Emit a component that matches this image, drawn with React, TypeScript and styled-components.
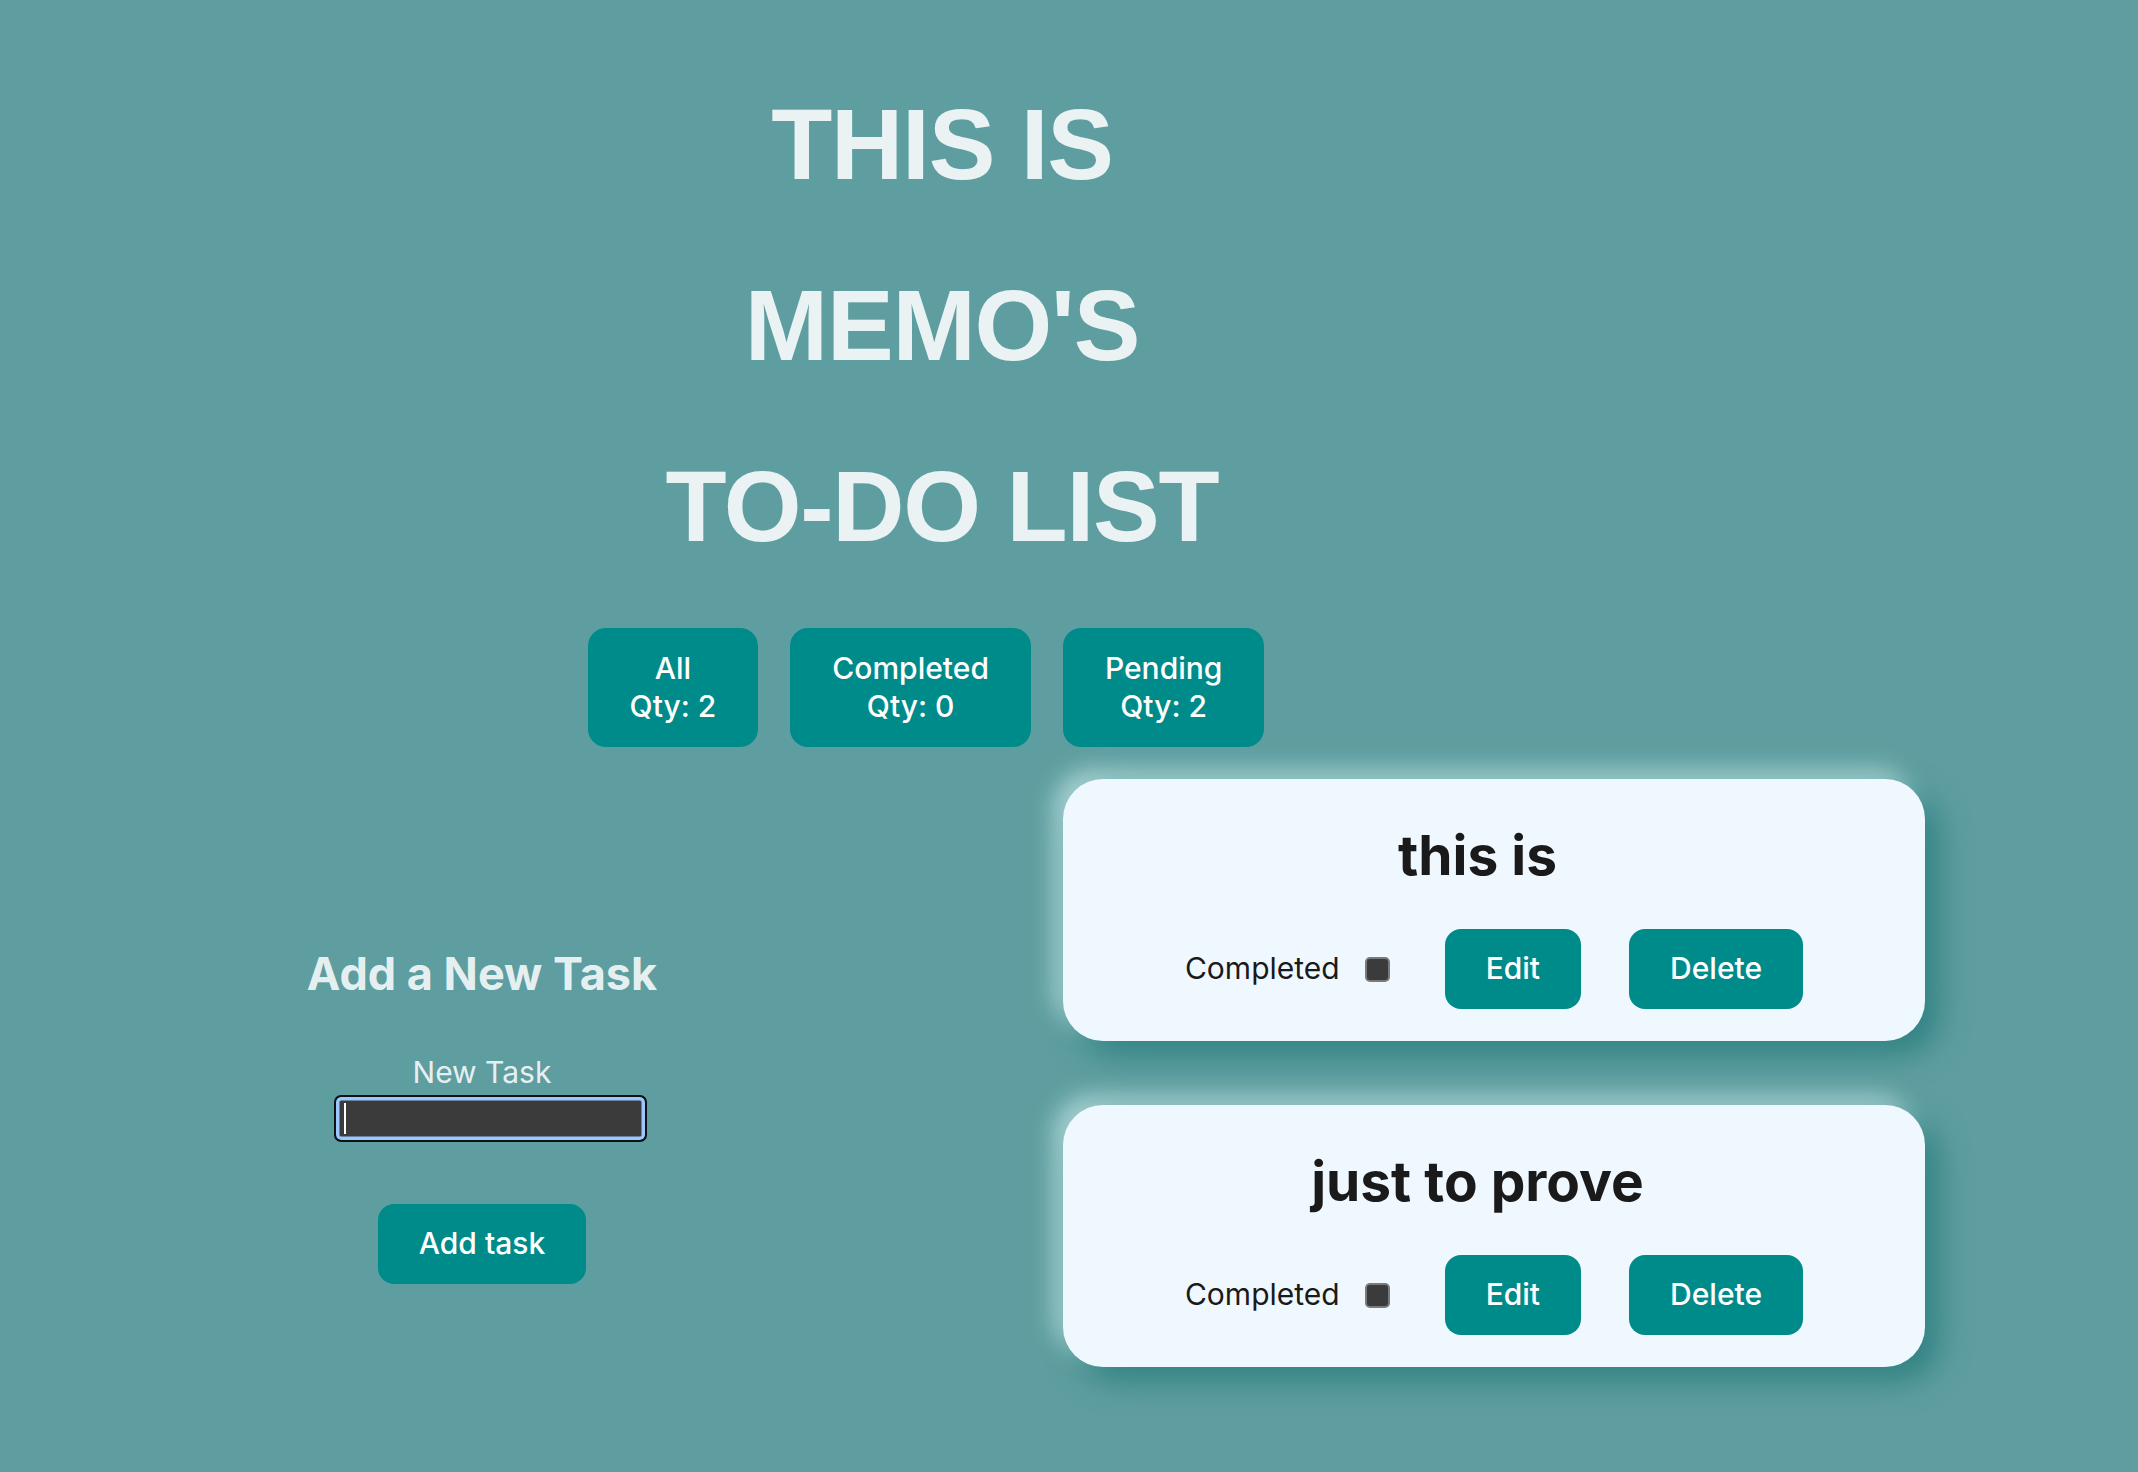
import React from "react";
import styled, { createGlobalStyle } from "styled-components";

const GlobalStyle = createGlobalStyle`
  html, body {
    margin: 0;
    padding: 0;
    background: #5f9ea0;
  }
  body {
    min-height: 100vh;
    font-family: Inter, "Noto Sans", sans-serif;
    color: rgba(255, 255, 255, 0.87);
    -webkit-font-smoothing: antialiased;
  }
`;

const Page = styled.div`
  min-height: 1472px;
  padding-top: 87px;
  box-sizing: border-box;
  background: #5f9ea0;
`;

const Header = styled.header`
  width: 1884px;
  display: flex;
  flex-direction: column;
  align-items: center;
`;

const TitleLine = styled.h1<{ $first?: boolean }>`
  margin: ${(p) => (p.$first ? "0" : "66px")} 0 0;
  font-family: "Liberation Sans", Arial, sans-serif;
  font-weight: 700;
  font-size: 100px;
  line-height: 115px;
  letter-spacing: -1.2px;
  color: rgba(255, 255, 255, 0.87);
  text-align: center;
  white-space: nowrap;
`;

const FilterRow = styled.nav`
  display: flex;
  gap: 32px;
  margin: 64px 32px 0 0;
`;

const BaseButton = styled.button`
  font-family: Inter, "Noto Sans", sans-serif;
  font-size: 30px;
  font-weight: 500;
  line-height: 37.5px;
  color: #ffffff;
  background: #008b8b;
  border: none;
  cursor: pointer;
  white-space: nowrap;
`;

const FilterButton = styled(BaseButton)`
  display: flex;
  flex-direction: column;
  align-items: center;
  padding: 22px 42px;
  border-radius: 18px;
`;

const ActionButton = styled(BaseButton)`
  height: 80px;
  padding: 0 41px;
  border-radius: 16px;
`;

const Main = styled.main`
  display: grid;
  grid-template-columns: 964px 862px;
  column-gap: 99px;
  align-items: start;
  margin-top: 32px;
  padding-bottom: 100px;
`;

const FormColumn = styled.section`
  display: flex;
  flex-direction: column;
  align-items: center;
  margin-top: 168px;
`;

const FormHeading = styled.h2`
  margin: 0;
  font-family: Inter, "Noto Sans", sans-serif;
  font-size: 45px;
  font-weight: 700;
  line-height: 54px;
  color: rgba(255, 255, 255, 0.87);
`;

const FieldLabel = styled.label`
  margin-top: 53px;
  font-size: 30px;
  font-weight: 400;
  line-height: 37.5px;
  color: rgba(255, 255, 255, 0.87);
`;

const InputWrap = styled.div`
  position: relative;
  margin: 3px 0 0 16px;
`;

const TaskInput = styled.input`
  display: block;
  box-sizing: border-box;
  width: 313px;
  height: 47px;
  margin: 0;
  padding: 0 8px;
  border: 2px solid #111111;
  border-radius: 7px;
  box-shadow: inset 0 0 0 3.5px #99c8ff;
  background: #3b3b3b;
  color: #ffffff;
  caret-color: transparent;
  font-family: Inter, sans-serif;
  font-size: 22px;
  outline: none;
  &:focus {
    outline: none;
  }
`;

const Caret = styled.span`
  position: absolute;
  left: 10px;
  top: 8px;
  width: 2px;
  height: 31px;
  background: #ffffff;
  pointer-events: none;
`;

const AddButton = styled(ActionButton)`
  margin-top: 62px;
`;

const TaskList = styled.section`
  display: flex;
  flex-direction: column;
  gap: 64px;
`;

const TaskCard = styled.article`
  display: flex;
  flex-direction: column;
  align-items: center;
  height: 262px;
  box-sizing: border-box;
  padding: 43px 0 32px;
  background: #f0f8ff;
  border-radius: 40px;
  box-shadow: 14px 14px 30px rgba(40, 125, 125, 0.85),
    -10px -10px 22px rgba(200, 232, 232, 0.7);
`;

const TaskTitle = styled.h3`
  margin: 0 33px 0 0;
  font-family: Inter, "Noto Sans", sans-serif;
  font-size: 55px;
  font-weight: 700;
  line-height: 66px;
  color: #1a1a1a;
  white-space: nowrap;
`;

const TaskRow = styled.div`
  display: flex;
  align-items: center;
  gap: 48px;
  margin-top: 41px;
`;

const CheckLabel = styled.label`
  display: flex;
  align-items: center;
  gap: 25px;
  margin-right: 7px;
  font-size: 30px;
  line-height: 37.5px;
  color: #1a1a1a;
`;

const CheckBox = styled.input`
  appearance: none;
  -webkit-appearance: none;
  margin: 0;
  width: 25px;
  height: 25px;
  box-sizing: border-box;
  background: #3b3b3b;
  border: 2px solid #7a7a7a;
  border-radius: 5px;
`;

const filters = [
  { name: "All", qty: 2 },
  { name: "Completed", qty: 0 },
  { name: "Pending", qty: 2 },
];

const tasks = ["this is", "just to prove"];

export default function App() {
  return (
    <>
      <GlobalStyle />
      <Page>
        <Header>
          <TitleLine $first>THIS IS</TitleLine>
          <TitleLine>MEMO'S</TitleLine>
          <TitleLine>TO-DO LIST</TitleLine>
          <FilterRow>
            {filters.map((f) => (
              <FilterButton key={f.name}>
                <span>{f.name}</span>
                <span>Qty: {f.qty}</span>
              </FilterButton>
            ))}
          </FilterRow>
        </Header>
        <Main>
          <FormColumn>
            <FormHeading>Add a New Task</FormHeading>
            <FieldLabel htmlFor="new-task">New Task</FieldLabel>
            <InputWrap>
              <TaskInput id="new-task" type="text" />
              <Caret />
            </InputWrap>
            <AddButton>Add task</AddButton>
          </FormColumn>
          <TaskList>
            {tasks.map((t) => (
              <TaskCard key={t}>
                <TaskTitle>{t}</TaskTitle>
                <TaskRow>
                  <CheckLabel>
                    Completed
                    <CheckBox type="checkbox" />
                  </CheckLabel>
                  <ActionButton>Edit</ActionButton>
                  <ActionButton>Delete</ActionButton>
                </TaskRow>
              </TaskCard>
            ))}
          </TaskList>
        </Main>
      </Page>
    </>
  );
}
